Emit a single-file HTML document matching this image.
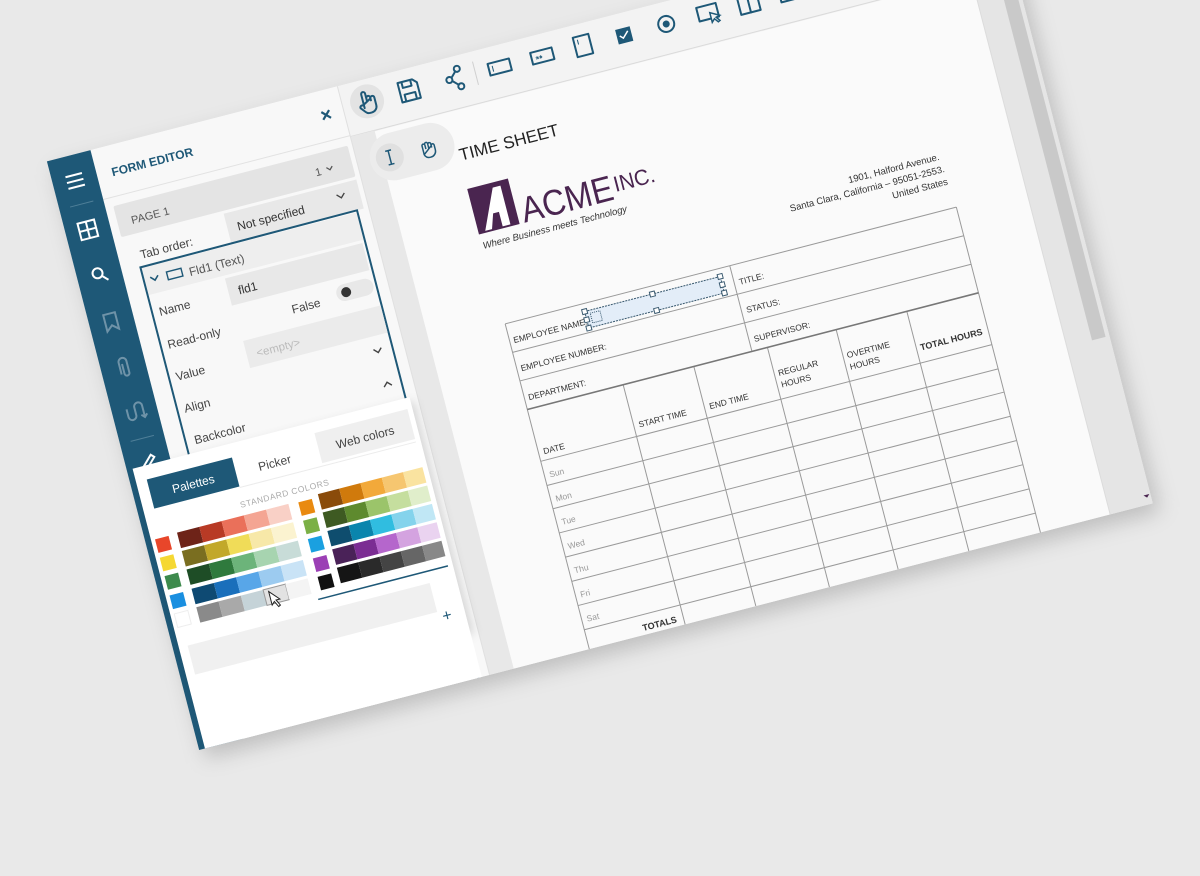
<!DOCTYPE html>
<html><head><meta charset="utf-8"><style>
html,body{margin:0;padding:0;width:1200px;height:630px;overflow:hidden;background:#e9e9e9;}
#r{position:absolute;left:0;top:0;transform:rotate(-14.5deg);transform-origin:0 0;}
text{font-family:"Liberation Sans",sans-serif;}
</style></head><body>
<div id="r">
<svg width="1100" height="900" viewBox="0 0 1100 900" xmlns="http://www.w3.org/2000/svg" style="overflow:visible">
<defs><filter id="sh" x="-10%" y="-10%" width="120%" height="120%"><feGaussianBlur stdDeviation="10"/></filter>
<filter id="sh2" x="-20%" y="-20%" width="140%" height="140%"><feGaussianBlur stdDeviation="5"/></filter></defs>
<!-- window shadow -->
<rect x="10" y="178" width="985" height="608" fill="rgba(0,0,0,0.18)" filter="url(#sh)"/>
<rect x="5" y="168" width="985" height="608" fill="#f2f2f2"/>
<!-- panel -->
<rect x="50" y="168" width="255" height="608" fill="#f8f8f8"/>
<line x1="50" y1="219" x2="305" y2="219" stroke="#e2e2e2"/>
<!-- toolbar -->
<rect x="305" y="168" width="685" height="52" fill="#f3f3f3"/>
<line x1="305" y1="220" x2="990" y2="220" stroke="#dadada"/>
<rect x="305" y="220" width="25" height="556" fill="#e8e8e8"/>
<line x1="305" y1="168" x2="305" y2="776" stroke="#e0e0e0"/>
<!-- page -->
<rect x="330" y="221" width="616" height="555" fill="#fafafa"/>
<rect x="946" y="168" width="44" height="608" fill="#e5e5e5"/>
<line x1="946" y1="221" x2="946" y2="776" stroke="#dcdcdc"/>
<rect x="972" y="221" width="14" height="382" fill="#c9c9c9"/>
<path d="M983,766 l6,0 l-3,3z" fill="#4a2550"/>
<!-- sidebar -->
<rect x="5" y="168" width="45" height="608" fill="#1e5877"/>
<g stroke="#fff" stroke-width="2" fill="none">
<path d="M19,188h17M19,194h17M19,200h17"/>
<line x1="16" y1="218" x2="40" y2="218" stroke="#4f7f98" stroke-width="1"/>
<rect x="19" y="236" width="17" height="17"/><path d="M27.5,236v17M19,244.5h17"/>
<circle cx="26" cy="289" r="5"/><path d="M30,293l5,5"/>
</g>
<g stroke="#6f93a8" stroke-width="2" fill="none">
<path d="M21,331v17l6,-5l6,5v-17z"/>
<path d="M24,393v-12a4,4 0 0 1 8,0v12a2.5,2.5 0 0 1 -5,0v-10"/>
<path d="M20,428v8a4,4 0 0 0 8,0v-8a4,4 0 0 1 8,0v12M33,437l3,3l3,-3"/>
<line x1="16" y1="460" x2="40" y2="460" stroke="#4f7f98" stroke-width="1"/>
</g>
<path d="M20,490l12,-12l3,3l-12,12l-4,1z" stroke="#fff" stroke-width="2" fill="none"/>
<!-- panel contents -->
<text x="65" y="199" font-size="12" font-weight="bold" fill="#1e5877">FORM EDITOR</text>
<path d="M283,189l8,8M291,189l-8,8" stroke="#1e5877" stroke-width="2.2"/>
<rect x="58" y="228" width="242" height="32" rx="2" fill="#e4e4e4"/>
<text x="72" y="250" font-size="11" fill="#555">PAGE 1</text>
<text x="262" y="250" font-size="11" fill="#555">1</text>
<path d="M274,244l3,3l3,-3" stroke="#555" stroke-width="1.3" fill="none"/>
<text x="72" y="286" font-size="12" fill="#444">Tab order:</text>
<rect x="163" y="263" width="137" height="30" fill="#e8e8e8"/>
<text x="173" y="283" font-size="12" fill="#333">Not specified</text>
<path d="M277,273l4,4l4,-4" stroke="#444" stroke-width="1.4" fill="none"/>
<path d="M278,301h2M282,301h2M278,305h2M282,305h2M278,309h2M282,309h2" stroke="#999" stroke-width="1.5"/>
<rect x="70" y="295" width="223" height="28" fill="#eeeeee"/>
<path d="M69,500L69,294L293,293L293,776" stroke="#1e5877" stroke-width="2" fill="none"/>
<path d="M76,306l4,4l4,-4" stroke="#1e5877" stroke-width="1.6" fill="none"/>
<rect x="93" y="305" width="15" height="8" stroke="#1e5877" stroke-width="1.4" fill="none"/>
<text x="115" y="315" font-size="12" fill="#555">Fld1 (Text)</text>
<rect x="148" y="326" width="142" height="28" fill="#e8e8e8"/>
<text x="76" y="346" font-size="12" fill="#444">Name</text>
<text x="158" y="345" font-size="12" fill="#333">fld1</text>
<text x="76" y="380" font-size="12" fill="#444">Read-only</text>
<text x="205" y="377" font-size="12" fill="#444">False</text>
<rect x="252" y="361" width="38" height="17" rx="8.5" fill="#e8e8e8"/>
<circle cx="262" cy="369.5" r="5" fill="#333"/>
<rect x="150" y="391" width="142" height="28" fill="#ebebeb"/>
<text x="160" y="410" font-size="11.5" fill="#bbb">&lt;empty&gt;</text>
<text x="76" y="413" font-size="12" fill="#444">Value</text>
<path d="M274,432l4,4l4,-4" stroke="#444" stroke-width="1.4" fill="none"/>
<text x="76" y="446" font-size="12" fill="#444">Align</text>
<path d="M275,471l4,-4l4,4" stroke="#444" stroke-width="1.4" fill="none"/>
<text x="78" y="479" font-size="12" fill="#444">Backcolor</text>
<!-- popup -->
<rect x="14" y="492" width="286" height="240" fill="rgba(0,0,0,0.15)" filter="url(#sh2)"/>
<rect x="11" y="487" width="286" height="289" fill="#ffffff"/>
<rect x="22" y="501" width="88" height="30" fill="#1e5877"/>
<text x="66" y="521" font-size="12" fill="#fff" text-anchor="middle">Palettes</text>
<text x="150" y="521" font-size="12" fill="#444" text-anchor="middle">Picker</text>
<rect x="196" y="498" width="96" height="31" fill="#efefef"/>
<text x="244" y="519" font-size="12" fill="#444" text-anchor="middle">Web colors</text>
<line x1="110" y1="532" x2="292" y2="532" stroke="#ececec"/>
<text x="152" y="552" font-size="8.5" fill="#aaa" text-anchor="middle" letter-spacing="0.5">STANDARD COLORS</text>
<g>
<rect x="15" y="561" width="14" height="14" fill="#e8462a"/>
<rect x="15" y="580" width="14" height="14" fill="#f5d833"/>
<rect x="15" y="599" width="14" height="14" fill="#3d8a4c"/>
<rect x="15" y="619" width="14" height="14" fill="#1a8fe0"/>
<rect x="15" y="638" width="14" height="14" fill="#fff" stroke="#eee"/>
<rect x="38" y="560" width="23" height="16" fill="#6e2318"/><rect x="61" y="560" width="23" height="16" fill="#b83a25"/><rect x="84" y="560" width="23" height="16" fill="#ea705a"/><rect x="107" y="560" width="23" height="16" fill="#f4a593"/><rect x="130" y="560" width="23" height="16" fill="#f9d0c6"/>
<rect x="38" y="579" width="23" height="16" fill="#7a6e20"/><rect x="61" y="579" width="23" height="16" fill="#c2a82a"/><rect x="84" y="579" width="23" height="16" fill="#f0dc58"/><rect x="107" y="579" width="23" height="16" fill="#f7e8a8"/><rect x="130" y="579" width="23" height="16" fill="#fbf3d0"/>
<rect x="38" y="598" width="23" height="16" fill="#1e4d26"/><rect x="61" y="598" width="23" height="16" fill="#2f7a3d"/><rect x="84" y="598" width="23" height="16" fill="#6cb47a"/><rect x="107" y="598" width="23" height="16" fill="#a7d4b0"/><rect x="130" y="598" width="23" height="16" fill="#c8dcd8"/>
<rect x="38" y="618" width="23" height="16" fill="#0e4a73"/><rect x="61" y="618" width="23" height="16" fill="#1a6fbb"/><rect x="84" y="618" width="23" height="16" fill="#58a6e8"/><rect x="107" y="618" width="23" height="16" fill="#9ccbf0"/><rect x="130" y="618" width="23" height="16" fill="#c9e3f6"/>
<rect x="38" y="637" width="23" height="16" fill="#8a8a8a"/><rect x="61" y="637" width="23" height="16" fill="#a9a9a9"/><rect x="84" y="637" width="23" height="16" fill="#c5d3d8"/><rect x="107" y="637" width="23" height="16" fill="#e2e2e2" stroke="#999"/><rect x="130" y="637" width="23" height="16" fill="#f4f4f4"/>
<rect x="163" y="561" width="14" height="14" fill="#e98a10"/>
<rect x="163" y="580" width="14" height="14" fill="#7bb046"/>
<rect x="163" y="599" width="14" height="14" fill="#1aa0e0"/>
<rect x="163" y="619" width="14" height="14" fill="#9b3fb5"/>
<rect x="163" y="638" width="14" height="14" fill="#111"/>
<rect x="184" y="558" width="22" height="16" fill="#8a4b0a"/><rect x="206" y="558" width="22" height="16" fill="#d07a0c"/><rect x="228" y="558" width="22" height="16" fill="#f2a93a"/><rect x="250" y="558" width="22" height="16" fill="#f6c670"/><rect x="272" y="558" width="20" height="16" fill="#fae3a0"/>
<rect x="184" y="577" width="22" height="16" fill="#3e5a22"/><rect x="206" y="577" width="22" height="16" fill="#5e8a2e"/><rect x="228" y="577" width="22" height="16" fill="#9bc46a"/><rect x="250" y="577" width="22" height="16" fill="#c5de9e"/><rect x="272" y="577" width="20" height="16" fill="#e0eecb"/>
<rect x="184" y="596" width="22" height="16" fill="#0e4d6e"/><rect x="206" y="596" width="22" height="16" fill="#0a85ad"/><rect x="228" y="596" width="22" height="16" fill="#30bde0"/><rect x="250" y="596" width="22" height="16" fill="#84d3ec"/><rect x="272" y="596" width="20" height="16" fill="#c0e7f5"/>
<rect x="184" y="615" width="22" height="16" fill="#4a2258"/><rect x="206" y="615" width="22" height="16" fill="#7b2d93"/><rect x="228" y="615" width="22" height="16" fill="#b566cc"/><rect x="250" y="615" width="22" height="16" fill="#d4a3e0"/><rect x="272" y="615" width="20" height="16" fill="#ead3f0"/>
<rect x="184" y="634" width="22" height="16" fill="#151515"/><rect x="206" y="634" width="22" height="16" fill="#2a2a2a"/><rect x="228" y="634" width="22" height="16" fill="#444"/><rect x="250" y="634" width="22" height="16" fill="#666"/><rect x="272" y="634" width="20" height="16" fill="#888"/>
</g>
<path d="M112,640l0,14l3,-3l3,6l2,-1l-3,-6l4,0z" fill="#fff" stroke="#222" stroke-width="1"/>
<line x1="158" y1="660" x2="292" y2="660" stroke="#1e5877" stroke-width="1.5"/>
<rect x="20" y="672" width="250" height="30" fill="#f0f0f0"/>
<text x="274" y="713" font-size="16" fill="#1e5877">+</text>
<!-- toolbar icons -->
<circle cx="330" cy="190" r="17" fill="#e3e3e3"/>
<g stroke="#1e5877" stroke-width="2" fill="none" stroke-linecap="round" stroke-linejoin="round">
<path d="M326,196v-14a2,2 0 0 1 4,0v8m0,-3a2,2 0 0 1 4,0v3m0,-2a2,2 0 0 1 4,0v8a6,6 0 0 1 -6,6h-2a5,5 0 0 1 -4,-2l-4,-5a2,2 0 0 1 3,-2z"/>
<path d="M364,180h15l4,4v16h-19z M368,180v6h9v-6 M368,200v-7h11v7"/>
<circle cx="425" cy="181" r="3"/><circle cx="415" cy="190" r="3"/><circle cx="425" cy="199" r="3"/><path d="M418,188l5,-5M418,192l5,5"/>
<rect x="456" y="184" width="22" height="12"/>
<rect x="500" y="184" width="22" height="12"/>
<rect x="545" y="180" width="16" height="20"/>
<circle cx="639" cy="190" r="8"/>
<rect x="672" y="182" width="20" height="14"/>
<rect x="714" y="180" width="20" height="20"/><path d="M724,180v20"/>
<rect x="756" y="182" width="20" height="16"/>
</g>
<line x1="442" y1="178" x2="442" y2="202" stroke="#d0d0d0"/>
<path d="M460,187v6" stroke="#1e5877" stroke-width="1"/>
<text x="504" y="195" font-size="9" fill="#1e5877" font-weight="bold">**</text>
<path d="M549,183v5" stroke="#1e5877" stroke-width="1"/>
<rect x="588" y="183" width="15" height="15" fill="#1e5877"/>
<path d="M591,190l3,3l6,-6" stroke="#fff" stroke-width="1.5" fill="none"/>
<circle cx="639" cy="190" r="3.5" fill="#1e5877"/>
<path d="M684,190l0,10l3,-3l3,4l2,-1l-3,-4l4,-1z" fill="#f3f3f3" stroke="#1e5877" stroke-width="1.5"/>
<!-- pill -->
<rect x="318" y="226" width="86" height="48" rx="24" fill="#ececec"/>
<circle cx="338" cy="250" r="14" fill="#e0e0e0"/>
<path d="M335,243h6M335,257h6M338,243v14" stroke="#1e5877" stroke-width="1.5"/>
<path d="M372,256v-9a1.5,1.5 0 0 1 3,0v4m0,-5a1.5,1.5 0 0 1 3,0v5m0,-4a1.5,1.5 0 0 1 3,0v4m0,-2a1.5,1.5 0 0 1 3,0v5a6,6 0 0 1 -6,6h-1a5,5 0 0 1 -5,-4z" stroke="#1e5877" stroke-width="1.5" fill="none"/>
<!-- page content -->
<text x="406" y="271" font-size="17" fill="#222">TIME SHEET</text>
<rect x="405" y="300" width="42" height="47" fill="#4a2550"/>
<path d="M412,345L430,305L438,305L438,345L430,345L430,330L424,330L419,345z" fill="#fff"/>
<text x="452" y="347" font-size="36" fill="#4a2550" textLength="94" lengthAdjust="spacingAndGlyphs">ACME</text>
<text x="548" y="340" font-size="22" fill="#4a2550" textLength="42" lengthAdjust="spacingAndGlyphs">INC.</text>
<text x="406" y="362" font-size="9.5" font-style="italic" fill="#333">Where Business meets Technology</text>
<g font-size="9.5" fill="#333" text-anchor="end">
<text x="870" y="390">1901, Halford Avenue.</text>
<text x="872" y="403">Santa Clara, California – 95051-2553.</text>
<text x="872" y="416">United States</text>
</g>
<!-- table -->
<g stroke="#9a9a9a" stroke-width="1" fill="none">
<path d="M408,440H874M408,469.5H874M408,499H874M408,440V776M874,440V776M640,440V528.5"/>
<path d="M507,528.5V776M580,528.5V776M656,528.5V776M727,528.5V776M800,528.5V776"/>
<path d="M408,582H874M408,607H874M408,631H874M408,656H874M408,681H874M408,706H874M408,731H874M408,756H874"/>
</g>
<path d="M408,528.5H874" stroke="#777" stroke-width="1.6"/>
<g font-size="8.5" fill="#333">
<text x="412" y="461">EMPLOYEE NAME:</text>
<text x="412" y="490">EMPLOYEE NUMBER:</text>
<text x="412" y="520">DEPARTMENT:</text>
<text x="645" y="461">TITLE:</text>
<text x="645" y="490">STATUS:</text>
<text x="645" y="520">SUPERVISOR:</text>
<text x="413" y="576">DATE</text>
<text x="512" y="574">START TIME</text>
<text x="585" y="574">END TIME</text>
<text x="660" y="559">REGULAR</text>
<text x="660" y="571">HOURS</text>
<text x="731" y="559">OVERTIME</text>
<text x="731" y="571">HOURS</text>
<text x="804" y="570" font-weight="bold" font-size="9">TOTAL HOURS</text>
</g>
<g font-size="8.5" fill="#999">
<text x="413" y="600">Sun</text><text x="413" y="625">Mon</text><text x="413" y="649">Tue</text><text x="413" y="674">Wed</text><text x="413" y="699">Thu</text><text x="413" y="724">Fri</text><text x="413" y="749">Sat</text>
</g>
<text x="500" y="772" font-size="9" font-weight="bold" fill="#333" text-anchor="end">TOTALS</text>
<!-- selected field -->
<rect x="488" y="448" width="140" height="17" fill="#e3edf8" stroke="#3a5a70" stroke-dasharray="2,1"/>
<g fill="#fff" stroke="#3a5a70" stroke-width="1">
<rect x="485.5" y="445.5" width="5" height="5"/><rect x="555.5" y="445.5" width="5" height="5"/><rect x="625.5" y="445.5" width="5" height="5"/>
<rect x="485.5" y="454" width="5" height="5"/><rect x="625.5" y="454" width="5" height="5"/>
<rect x="485.5" y="462.5" width="5" height="5"/><rect x="555.5" y="462.5" width="5" height="5"/><rect x="625.5" y="462.5" width="5" height="5"/>
</g>
<rect x="493" y="451" width="10" height="10" fill="none" stroke="#3a5a70" stroke-dasharray="1,1"/>
</svg>
</div>
</body></html>
